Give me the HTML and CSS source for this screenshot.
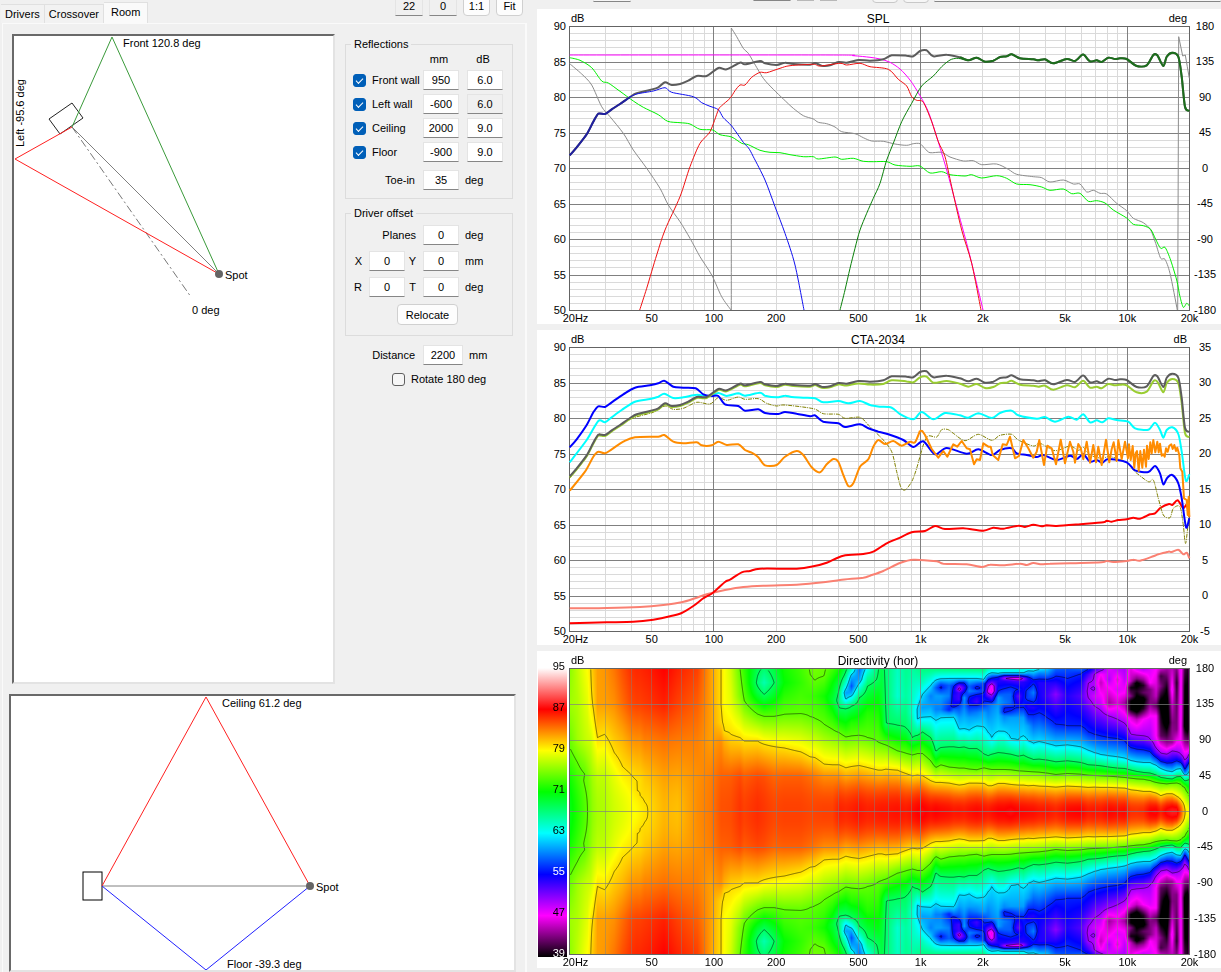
FILE: index.html
```html
<!DOCTYPE html>
<html lang="en">
<head>
  <meta charset="UTF-8" />
  <title>Room</title>
  <link rel="stylesheet" href="styles.css">
</head>
<body>

  <div class="app">
    <div class="side">
      <div class="side-head">
        <div class="tabs" role="tablist">
          <button class="tab" role="tab">Drivers</button>
          <button class="tab" role="tab">Crossover</button>
          <button class="tab active" role="tab" aria-selected="true">Room</button>
        </div>
        <div class="tools">
          <input class="num" type="text" value="22" aria-label="Horizontal angle" readonly>
          <input class="num" type="text" value="0" aria-label="Vertical angle" readonly>
          <button class="btn">1:1</button>
          <button class="btn">Fit</button>
        </div>
      </div>

      <div class="page">
        <div class="upper">
          <svg class="view plan">
            <polygon points="35,83 58,67 69,82 46,98" fill="none" stroke="#222" />
            <polyline points="58,91 98,1 205,238" fill="none" stroke="#3a9a3a" />
            <line x1="58" y1="91" x2="205" y2="238" stroke="#808080" />
            <line x1="58" y1="91" x2="177" y2="261" stroke="#777" stroke-dasharray="8 3 2 3" />
            <polyline points="58,91 1,123 205,238" fill="none" stroke="#ff2020" />
            <circle cx="205" cy="238" r="4" fill="#646464" />
            <text x="109" y="11">Front 120.8 deg</text>
            <text x="211" y="243">Spot</text>
            <text x="178" y="278">0 deg</text>
            <text transform="translate(10 111) rotate(-90)">Left -95.6 deg</text>
          </svg>

          <div class="form">
            <fieldset>
              <legend>Reflections</legend>
              <div class="reflections">
                <span class="head mm">mm</span>
                <span class="head">dB</span>
                <label class="check"><input type="checkbox" checked>Front wall</label>
                <input class="num" type="text" value="950" aria-label="Front wall mm">
                <input class="num" type="text" value="6.0" aria-label="Front wall dB">
                <label class="check"><input type="checkbox" checked>Left wall</label>
                <input class="num" type="text" value="-600" aria-label="Left wall mm">
                <input class="num" type="text" value="6.0" aria-label="Left wall dB" readonly>
                <label class="check"><input type="checkbox" checked>Ceiling</label>
                <input class="num" type="text" value="2000" aria-label="Ceiling mm">
                <input class="num" type="text" value="9.0" aria-label="Ceiling dB">
                <label class="check"><input type="checkbox" checked>Floor</label>
                <input class="num" type="text" value="-900" aria-label="Floor mm">
                <input class="num" type="text" value="9.0" aria-label="Floor dB">
              </div>
              <div class="line toe">
                <label for="toe">Toe-in</label>
                <input class="num" id="toe" type="text" value="35">
                <span class="unit">deg</span>
              </div>
            </fieldset>

            <fieldset>
              <legend>Driver offset</legend>
              <div class="offset">
                <label class="wide" for="planes">Planes</label>
                <input class="num" id="planes" type="text" value="0">
                <span class="unit">deg</span>
                <label for="ox">X</label>
                <input class="num" id="ox" type="text" value="0">
                <label for="oy">Y</label>
                <input class="num" id="oy" type="text" value="0">
                <span class="unit">mm</span>
                <label for="or">R</label>
                <input class="num" id="or" type="text" value="0">
                <label for="ot">T</label>
                <input class="num" id="ot" type="text" value="0">
                <span class="unit">deg</span>
                <button class="btn relocate">Relocate</button>
              </div>
            </fieldset>

            <div class="line distance">
              <label for="distance">Distance</label>
              <input class="num" id="distance" type="text" value="2200">
              <span class="unit">mm</span>
            </div>
            <label class="check rotate"><input type="checkbox">Rotate 180 deg</label>
          </div>
        </div>

        <svg class="view section">
          <rect x="72" y="176" width="19" height="28" fill="#fff" stroke="#000" />
          <line x1="91" y1="190" x2="299" y2="190" stroke="#808080" />
          <polyline points="91,190 195,1 299,190" fill="none" stroke="#ff2020" />
          <polyline points="91,190 195,274 299,190" fill="none" stroke="#2020ff" />
          <circle cx="299" cy="190" r="4" fill="#646464" />
          <text x="211" y="11">Ceiling 61.2 deg</text>
          <text x="305" y="195">Spot</text>
          <text x="216" y="272">Floor -39.3 deg</text>
        </svg>
      </div>
    </div>

    <div class="charts">
      <div class="chart-tools">
        <input class="t-a" type="text" aria-label="Smoothing">
        <input class="t-b" type="text" aria-label="Scale">
        <button class="t-c" aria-label="Down"></button>
        <button class="t-c" aria-label="Up"></button>
        <button class="t-d" aria-label="Copy"></button>
        <button class="t-d" aria-label="Paste"></button>
        <input class="t-e" type="text" aria-label="Notes">
      </div>
      <svg class="chart" id="spl" viewBox="0 0 684 315"></svg>
      <svg class="chart" id="cta" viewBox="0 0 684 315"></svg>
      <svg class="chart" id="directivity" viewBox="0 0 684 317"></svg>
    </div>
  </div>

  <script src="charts.js"></script>
</body>
</html>
```
FILE: styles.css
```css
* {
  box-sizing: border-box;
}

body {
  margin: 0;
  background: #f0f0f0;
  color: #000;
  font-family: "Liberation Sans", Arial, sans-serif;
  font-size: 11px;
  line-height: 14px;
}

input, button {
  font: inherit;
  color: inherit;
}

.app {
  display: grid;
  grid-template-columns: 537px 1fr;
  min-height: 100vh;
}

/* left side */

.side {
  display: flex;
  flex-direction: column;
  padding: 0 10px 0 0;
}

.side-head {
  display: flex;
  justify-content: space-between;
  align-items: flex-end;
  height: 23px;
}

.tabs {
  display: flex;
  align-items: flex-end;
  padding-left: 1px;
}

.tab {
  height: 19px;
  padding: 0 4px;
  border: 1px solid #e0e0e0;
  border-left: 0;
  border-bottom: 0;
  background: #f2f2f2;
}

.tab.active {
  height: 21px;
  padding: 0 7px 3px;
  background: #fafafa;
}

.tools {
  display: flex;
  align-items: flex-end;
  gap: 6px;
  height: 23px;
  padding: 0 4px 7px 0;
}

.tools .num {
  width: 28px;
}

.tools .btn {
  width: 27px;
}

.num {
  width: 36px;
  height: 20px;
  padding: 0;
  border: 1px solid #e4e4e4;
  border-bottom-color: #868686;
  background: #fff;
  text-align: center;
}

.num:read-only {
  background: #f0f0f0;
}

.btn {
  height: 21px;
  padding: 0;
  border: 1px solid #d0d0d0;
  border-radius: 4px;
  background: #fdfdfd;
}

.page {
  display: flex;
  flex-direction: column;
  flex: 1;
  gap: 10px;
  margin-left: 2px;
  padding: 10px 9px 0 6px;
  border-top: 1px solid #fafafa;
  border-left: 1px solid #fafafa;
  border-right: 2px solid #fafafa;
}

.upper {
  display: flex;
  flex: 1;
  gap: 10px;
  padding-left: 3px;
}

.view {
  display: block;
  background: #fff;
  border: 2px solid;
  border-color: #696969 #e3e3e3 #e3e3e3 #696969;
  font-size: 11px;
}

.plan {
  width: 323px;
  height: auto;
}

.section {
  width: 100%;
  height: 278px;
}

/* forms */

.form {
  width: 168px;
  padding-top: 3px;
}

fieldset {
  margin: 0 0 7px;
  padding: 0 9px 8px 7px;
  border: 1px solid #dcdcdc;
}

legend {
  padding: 0 3px;
  margin-left: -2px;
  line-height: 14px;
}

.reflections {
  display: grid;
  grid-template-columns: 70px 44px 36px;
  grid-template-rows: 15px;
  grid-auto-rows: 20px;
  row-gap: 4px;
  align-items: center;
}

.head {
  text-align: center;
  width: 32px;
}

.mm {
  grid-column: 2;
}

.check {
  display: flex;
  align-items: center;
  gap: 6px;
  white-space: nowrap;
}

.check input {
  appearance: none;
  width: 13px;
  height: 13px;
  margin: 0;
  border: 1px solid #606060;
  border-radius: 3px;
  background: #f6f6f6;
}

.check input:checked {
  border-color: #005fb8;
  background: #005fb8;
}

.check input:checked::before {
  content: "";
  display: block;
  width: 6px;
  height: 3px;
  margin: 3px 0 0 2px;
  border: solid #fff;
  border-width: 0 0 1px 1px;
  transform: rotate(-45deg);
}

.line {
  display: flex;
  align-items: center;
}

.line label {
  width: 70px;
  padding-right: 8px;
  text-align: right;
}

.unit {
  padding-left: 6px;
}

.toe {
  margin-top: 8px;
}

.offset {
  display: grid;
  grid-template-columns: 16px 36px 18px 36px 1fr;
  gap: 6px 0;
  align-items: center;
  padding: 5px 0 2px;
}

.offset label {
  padding: 0 7px 0 1px;
  text-align: right;
}

.offset .wide {
  grid-column: 1 / 4;
}

.relocate {
  grid-column: 2 / 5;
  width: 61px;
  margin: 1px 0 0 28px;
}

.distance {
  padding-left: 8px;
  margin-top: 9px;
}

.distance .num {
  width: 40px;
}

.rotate {
  height: 20px;
  margin: 4px 0 0 47px;
}

/* right side */

.charts {
  display: flex;
  flex-direction: column;
  gap: 6px;
}

.chart-tools {
  display: flex;
  align-items: flex-end;
  height: 3px;
  padding: 0 0 0 56px;
  overflow: hidden;
}

.chart-tools input,
.chart-tools button {
  flex: none;
  height: 22px;
  padding: 0;
  border: 1px solid #e4e4e4;
  background: #f6f6f6;
}

.chart-tools input {
  border-bottom-color: #868686;
  margin-bottom: 1px;
}

.chart-tools .t-a {
  width: 38px;
  margin-right: 122px;
}

.chart-tools .t-b {
  width: 38px;
  margin-right: 6px;
  margin-bottom: 2px;
}

.chart-tools .t-c {
  width: 17px;
  margin: 0 6px 2px 0;
  background: #c4c4c4;
  border-color: #b8b8b8;
}

.chart-tools .t-d {
  width: 26px;
  margin: 0 5px 0 0;
  border-color: #c8c8c8;
  border-radius: 4px;
}

.chart-tools .t-c + .t-d {
  margin-left: 29px;
}

.chart-tools .t-e {
  flex: 1;
  min-width: 0;
}

.chart {
  display: block;
  width: 100%;
  height: auto;
  background: #fff;
}

.chart text {
  font-size: 11px;
}

.chart .title {
  font-size: 12px;
}

.chart canvas {
  display: block;
  width: 620px;
  height: 286px;
}
```
FILE: charts.js
```js
const NS = 'http://www.w3.org/2000/svg';
const LEFT = 32.5;
const TOP = 17.5;
const WIDTH = 620;

function add(parent, name, attrs, text) {
  const el = document.createElementNS(NS, name);
  for (const k in attrs) el.setAttribute(k, attrs[k]);
  if (text !== undefined) el.textContent = text;
  parent.appendChild(el);
  return el;
}

// points are stored at 3 units per pixel in two tiles, the second one starts at 1020
function pts(a, b) {
  const read = (s, dx) => s.trim().split(/\s+/).filter(Boolean).map(p => {
    const [x, y] = p.split(',').map(Number);
    return [x + dx, y];
  });
  return read(a, 0).concat(read(b || '', 1020));
}

function toPath(points, originY, straight) {
  const p = points.map(([x, y]) => [(x - 21) / 3, (y - originY) / 3]);
  let d = `M${p[0][0].toFixed(1)} ${p[0][1].toFixed(1)}`;
  for (let i = 1; i < p.length; i++) {
    if (straight) {
      d += `L${p[i][0].toFixed(1)} ${p[i][1].toFixed(1)}`;
      continue;
    }
    const a = p[Math.max(i - 2, 0)], b = p[i - 1], c = p[i], e = p[Math.min(i + 1, p.length - 1)];
    const c1 = [b[0] + (c[0] - a[0]) / 7, b[1] + (c[1] - a[1]) / 7];
    const c2 = [c[0] - (e[0] - b[0]) / 7, c[1] - (e[1] - b[1]) / 7];
    d += 'C' + [...c1, ...c2, ...c].map(v => v.toFixed(1)).join(' ');
  }
  return d;
}

function trace(svg, points, originY, color, width, opts = {}) {
  add(svg, 'path', {
    d: toPath(points, originY, opts.straight),
    fill: 'none', stroke: color, 'stroke-width': width,
    'stroke-linejoin': 'round', 'stroke-dasharray': opts.dash || 'none'
  });
}

const freqX = f => LEFT + WIDTH * Math.log10(f / 20) / 3;

function verticals(svg, height, minor, major) {
  for (const dec of [10, 100, 1000, 10000]) {
    for (let i = 1; i < 10; i++) {
      const f = dec * i;
      if (f <= 20 || f >= 20000) continue;
      const x = Math.floor(freqX(f)) + 0.5;
      add(svg, 'line', { x1: x, x2: x, y1: TOP, y2: TOP + height, stroke: i === 1 ? major : minor });
    }
  }
}

function freqLabels(svg, y) {
  [[20, '20Hz', 6], [50, '50', 0], [100, '100', 0], [200, '200', 0], [500, '500', 0],
   [1000, '1k', 0], [2000, '2k', 0], [5000, '5k', 0], [10000, '10k', 0], [20000, '20k', 0]]
    .forEach(([f, t, dx]) => add(svg, 'text', { x: freqX(f) + dx, y, 'text-anchor': 'middle' }, t));
}

function captions(svg, title, right) {
  add(svg, 'text', { x: 34, y: 13 }, 'dB');
  add(svg, 'text', { x: 341, y: 14, 'text-anchor': 'middle', class: 'title' }, title);
  add(svg, 'text', { x: 650, y: 13, 'text-anchor': 'end' }, right);
}

function rightLabels(svg, labels, height) {
  labels.forEach((t, i) => add(svg, 'text', {
    x: 668, y: TOP + 3 + i * height / (labels.length - 1), 'text-anchor': 'middle'
  }, t));
}

function lineChart(svg, title, right, labels) {
  const h = 284;
  for (let i = 0; i <= 40; i++) {
    if (i % 5 === 0) continue;
    const y = Math.floor(TOP + i * h / 40) + 0.5;
    add(svg, 'line', { x1: LEFT, x2: LEFT + WIDTH, y1: y, y2: y, stroke: '#dadada' });
  }
  verticals(svg, h, '#dadada', '#808080');
  for (let i = 0; i <= 8; i++) {
    const y = Math.floor(TOP + i * h / 8) + 0.5;
    add(svg, 'line', { x1: LEFT, x2: LEFT + WIDTH, y1: y, y2: y, stroke: '#808080' });
    add(svg, 'text', { x: 29, y: y + 3, 'text-anchor': 'end' }, 90 - i * 5);
  }
  add(svg, 'rect', { x: LEFT, y: TOP, width: WIDTH, height: h, fill: 'none', stroke: '#646464' });
  captions(svg, title, right);
  rightLabels(svg, labels, h);
  freqLabels(svg, 313);
}

const total = pts(
  `119,466 140,442 170,403 190,365 205,341 225,342 245,328 270,312 300,291 320,280 360,270 385,262
   405,247 425,255 450,252 475,242 500,228 530,228 565,204 590,208 630,188 645,193 690,183 705,190
   740,195 765,188 790,192 840,194 855,189 875,197 900,196 925,186 950,188 985,180 1020,182`,
  `40,178 65,166 110,167 130,169 150,153 170,151 190,169 230,164 270,172 295,181 320,173 345,185
   370,182 390,171 410,169 425,163 450,175 490,178 505,181 525,178 550,190 590,177 615,183 635,165 643,165
   660,184 680,181 695,186 715,173 735,177 750,175 770,177 800,198 830,196 850,165 862,166 880,198 890,170 907,158 925,170
   935,230 945,320 958,333`);

function drawSpl() {
  const svg = document.getElementById('spl');
  const o = 27;
  lineChart(svg, 'SPL', 'deg', [180, 135, 90, 45, 0, -45, -90, -135, -180]);

  const gray = '#8c8c8c';
  trace(svg, pts(
    `119,191 155,222 185,255 215,320 240,350 280,400 310,450 350,505 390,565 415,615 450,665 480,715
     510,770 545,825 575,890 603,930`), o, gray, 1);
  trace(svg, pts('604,930 604,84'), o, gray, 1);
  trace(svg, pts(
    `604,84 620,110 640,145 655,160 670,185 700,235 730,268 760,297 790,325 820,347 850,357 865,367
     890,371 915,381 935,395 975,401 1000,413 1025,423 1060,424`,
    `75,432 110,436 130,431 150,431 165,446 180,458 215,457 240,471 280,483 310,482 335,494 380,492
     415,508 440,523 490,530 515,533 540,546 580,540 610,552 630,552 650,576 670,571 690,580 710,582
     740,610 770,632 790,655 820,668 842,690 857,730 872,775 885,778 900,820 922,930`), o, gray, 1);
  trace(svg, pts('', '923,930 926,110 938,168 946,165 952,200 958,235'), o, gray, 1, { straight: true });

  trace(svg, pts(
    `119,173 150,181 185,203 215,243 235,249 270,274 310,303 340,322 385,344 413,364 450,368 480,372
     510,388 548,390 570,404 605,411 635,430 655,434 690,451 720,457 750,458 780,464 820,470 850,470
     865,477 915,471 935,478 970,475 1000,484 1030,485`,
    `50,485 75,495 120,499 150,498 180,519 215,515 240,524 285,528 305,524 335,534 380,527 410,535
     440,552 480,554 515,561 540,571 580,567 605,581 630,580 655,604 680,602 705,609 730,630 770,654
     790,673 820,677 842,688 857,718 872,745 885,742 900,775 920,840 930,890 940,922 950,910 958,918`),
    o, '#00f000', 1);

  trace(svg, pts('119,165 900,165 970,167 1020,172',
    `30,177 60,187 90,207 120,240 150,287 175,335 200,410 230,510 260,620 290,730 315,830 339,930`),
    o, '#f0f', 1);

  trace(svg, total, o, '#5c5c5c', 2);
  trace(svg, total.filter(p => p[0] <= 305), o, '#2020a0', 2);
  trace(svg, pts(
    `300,291 320,282 370,273 405,263 425,277 490,290 515,308 540,319 565,329 580,353 605,378 640,427
     655,443 670,470 705,540 735,620 765,700 795,795 822,930`), o, '#1010f0', 1);

  trace(svg, pts(
    `329,930 350,865 380,765 405,690 450,590 480,500 510,430 540,395 565,330 575,317 600,295 615,272
     630,255 645,255 665,232 690,217 710,218 750,205 780,197 850,193 870,198 930,190 950,195 990,190
     1020,200`,
    `55,208 85,238 110,258 125,290 140,301 160,307 185,365 205,425 225,470 245,560 275,690 305,790 333,930`),
    o, '#f01010', 1);

  trace(svg, pts('930,930 945,870 960,805 975,745 990,690 1010,640 1030,595',
    `30,550 50,480 70,430 95,365 125,310 155,258 190,228 215,200 240,180 260,175 280,178`),
    o, '#0a800a', 1);
  trace(svg, total.filter(p => p[0] >= 1290), o, '#1c6e1c', 2);
}

function drawCta() {
  const svg = document.getElementById('cta');
  const o = 15;
  lineChart(svg, 'CTA-2034', 'dB', [35, 30, 25, 20, 15, 10, 5, 0, -5]);

  trace(svg, pts(
    `119,850 230,849 330,846 400,840 455,832 500,818 530,808 585,795 640,786 700,782 800,779 880,772
     930,765 1000,758 1020,752`,
    `40,738 90,714 130,704 200,709 220,716 290,718 335,726 360,719 400,721 450,716 470,720 490,714
     515,718 540,716 600,715 695,712 710,708 730,711 770,708 790,704 810,707 850,694 865,688 895,680
     905,681 925,674 940,688 950,683 958,700`), o, '#fa8072', 2);
  trace(svg, pts(
    `119,895 230,892 310,890 370,884 420,874 455,864 490,843 520,820 548,804 585,771 600,764 635,742
     660,738 690,731 800,731 850,724 890,713 940,692 1000,687 1030,680`,
    `50,655 85,640 125,622 165,618 195,603 225,612 280,610 340,617 370,608 400,611 445,602 465,606
     490,599 515,604 530,601 560,603 640,597 700,592 710,587 725,590 745,585 770,583 790,578 810,581
     840,568 855,565 872,548 897,537 907,540 923,526 940,550 950,540 958,575`), o, '#f00', 2);

  trace(svg, pts(
    `119,460 170,395 205,328 225,332 300,283 370,262 405,243 430,253 460,250 500,232 540,237 565,218
     590,226 625,216 645,223 685,221 710,235 740,243 765,240 850,251 880,266 925,268 945,280 990,277
     1015,300`,
    `20,325 40,345 65,380 80,440 92,485 105,495 125,470 140,430 160,360 175,333 200,336 215,314 235,314
     250,325 285,347 325,328 365,346 390,331 425,328 445,345 490,363 510,355 555,377 600,363 625,376
     640,367 660,390 695,400 720,395 770,412 795,440 835,470 850,465 865,520 880,570 900,578 910,550
     930,545 940,600 947,655 958,560`), o, '#808000', 1, { dash: '4 1 1 1' });

  trace(svg, pts(
    `119,412 170,345 205,288 225,292 245,277 275,255 315,230 360,222 385,215 403,206 430,219 460,217
     500,209 535,214 565,204 590,213 625,205 645,212 690,203 705,212 740,217 765,212 785,216 820,218
     855,220 880,232 925,228 955,235 990,228 1020,240`,
    `30,245 65,248 90,267 130,283 155,261 190,283 225,264 270,271 295,278 325,265 365,279 390,264
     425,257 445,271 500,281 525,276 555,290 595,275 620,284 640,268 660,292 680,286 697,292 715,280
     740,285 775,290 795,310 835,314 855,293 870,315 880,338 890,315 907,307 925,327 935,380 945,455
     950,468 958,448`), o, '#0ff', 2);
  trace(svg, pts(
    `119,367 140,343 170,300 190,262 205,244 225,246 245,232 280,208 315,188 360,181 385,175 403,167
     430,185 460,188 497,190 520,208 545,213 565,213 585,238 625,243 645,257 685,253 705,264 745,267
     765,261 800,266 840,274 855,271 880,290 925,295 945,306 990,298 1015,310`,
    `25,320 55,328 100,345 130,366 160,349 195,388 230,369 290,386 325,373 365,390 390,375 425,370
     440,385 470,390 500,396 520,390 560,405 600,392 620,402 640,388 660,410 680,405 697,413 715,402 770,412
     795,436 835,441 855,423 870,445 880,478 892,458 907,450 925,475 935,520 945,590 950,608 958,580`),
    o, '#00f', 2);

  const onAxis = total.map(([x, y]) => [x, y - 12]);
  const window = onAxis.map(([x, y]) =>
    [x, y + 3 + 13 * Math.min(1, Math.max(0, (x - 900) / 270))]);
  trace(svg, window, o, '#9acd32', 2);
  trace(svg, onAxis, o, '#5c5c5c', 2);

  trace(svg, pts(
    `119,497 165,440 190,395 205,380 225,385 245,373 280,350 315,337 385,335 403,330 430,350 460,355
     500,352 515,361 545,361 565,350 590,360 625,358 645,375 665,383 685,397 705,421 740,420 765,395
     800,378 820,390 845,427 870,442 890,418 910,402 925,410 940,450 955,483 970,475 990,425 1015,403`,
    `10,365 25,345 45,357 70,348 95,362 120,350 135,352 150,317`), o, '#ff8c00', 2);
  trace(svg, pts('',
    `150,317 157,318 165,330 185,372 205,398 220,378 232,395 250,358 262,365 275,348 290,370 300,373
     312,418 320,403 330,405 340,355 355,365 362,365 368,390 385,405 398,358 410,360 420,335 435,400
     447,393 460,345 475,370 490,398 500,380 508,345 522,420 532,362 545,370 558,418 572,344 585,415
     600,350 610,380 615,413 625,357 632,370 640,403 650,350 660,413 670,360 678,412 685,365 695,420
     708,344 718,412 725,372 731,352 740,408 745,345 755,402 765,350 774,400 777,358 782,405 788,363
     793,428 797,385 801,378 806,438 811,378 817,428 822,374 828,425 831,362 836,402 841,352 845,385
     850,345 856,382 862,350 866,382 870,356 875,392 880,388 884,395 888,370 893,380 898,362 904,358
     908,372 913,360 918,378 922,368 928,390 931,430 937,440 942,520 950,525 953,570 956,515 958,575`),
    o, '#ff8c00', 2, { straight: true });
}

// directivity map columns: x, then pairs of (row, level) from 180 deg down to the axis
const MAP = [
  [119, 70, 75.5, 175, 76, 310, 74, 400, 71.5, 499, 70.5],
  [140, 70, 77, 283, 76, 350, 74, 499, 72],
  [162, 70, 78.5, 283, 77, 385, 74, 405, 74.2, 499, 73.5],
  [170, 70, 79, 283, 77.3, 391, 74.6, 499, 74],
  [180, 70, 80, 175, 79.7, 283, 77.5, 400, 75.5, 499, 75],
  [186, 70, 80.8, 175, 80, 283, 78.2, 391, 76.2, 499, 75.6],
  [200, 70, 82, 175, 82, 275, 80, 391, 77, 499, 76.3],
  [222, 70, 82.3, 175, 82, 265, 80, 391, 77, 499, 76.5],
  [250, 70, 83.3, 175, 82.5, 320, 80, 391, 78.3, 499, 77.5],
  [275, 70, 84.5, 175, 83.6, 283, 81.3, 362, 80, 499, 78.1],
  [300, 70, 85.5, 175, 84.7, 283, 82.3, 385, 80, 499, 78.8],
  [318, 70, 85.8, 175, 85, 283, 82.5, 405, 80, 435, 80, 499, 79.1],
  [328, 70, 85.8, 175, 85, 283, 82.5, 404, 80.1, 450, 80, 499, 79.4],
  [342, 70, 86, 175, 85.2, 283, 83, 391, 80.8, 470, 80, 499, 79.8],
  [351, 70, 86.1, 175, 85.3, 283, 83, 391, 81, 499, 80],
  [400, 70, 87, 175, 86, 283, 83.5, 391, 82, 499, 81.3],
  [440, 70, 86, 175, 85, 283, 83.2, 391, 81.8, 499, 81],
  [500, 70, 85, 175, 84, 283, 83, 391, 82.5, 499, 82.6],
  [540, 70, 82, 175, 82, 283, 82, 391, 83, 499, 83.2],
  [571, 70, 80, 175, 80, 230, 80.3, 283, 82.5, 391, 84, 499, 84.5],
  [580, 70, 79, 175, 79, 255, 80, 283, 81.5, 391, 84, 499, 84.5],
  [600, 70, 77.5, 175, 78.3, 265, 80, 391, 84.1, 499, 84.6],
  [628, 70, 74, 150, 75, 175, 76, 275, 80, 391, 84.7, 499, 85.4],
  [640, 70, 72.5, 163, 74, 285, 80, 391, 84.1, 499, 85],
  [680, 70, 68.5, 110, 67.5, 140, 69, 190, 73, 204, 74, 285, 80, 391, 84.7, 499, 85.6],
  [700, 70, 67.5, 110, 65.5, 145, 68, 211, 74, 295, 80, 391, 84.5, 499, 85.3],
  [730, 70, 69, 110, 68, 150, 70, 211, 74, 302, 80, 391, 83.8, 499, 84.8],
  [760, 70, 71.5, 110, 71, 205, 74, 306, 80, 391, 84, 499, 85],
  [810, 70, 73, 110, 72.5, 203, 74, 318, 80, 391, 84, 499, 85],
  [838, 70, 74.1, 85, 74, 150, 72.8, 212, 74, 333, 80, 391, 83.5, 499, 84.8],
  [852, 70, 74.6, 103, 74, 150, 72.6, 217, 74, 335, 80, 391, 83.2, 499, 84.9],
  [880, 70, 74.2, 90, 74, 150, 71.5, 235, 74, 355, 80, 391, 82.5, 499, 85],
  [905, 70, 73, 110, 71, 160, 69.5, 250, 74, 357, 80, 391, 82.5, 499, 85],
  [925, 70, 71.5, 130, 68, 165, 67, 185, 68, 260, 74, 357, 80, 391, 82.5, 499, 86],
  [945, 70, 68.5, 90, 67, 115, 64, 140, 60, 160, 62, 188, 68, 273, 74, 366, 80, 499, 85.8],
  [962, 70, 65, 90, 61, 120, 57.5, 145, 61, 180, 68, 230, 72, 270, 74, 362, 80, 499, 86],
  [985, 70, 58.5, 100, 60, 125, 64, 155, 68, 210, 71, 268, 74, 359, 80, 499, 86.4],
  [1010, 70, 63.5, 95, 66, 120, 68, 200, 72, 275, 74, 365, 80, 499, 86],
  [1042, 70, 67.9, 100, 68.3, 150, 70.5, 289, 74, 373, 80, 499, 86.2],
  [1053, 70, 68.9, 150, 69.5, 240, 71, 293, 74, 373, 80, 499, 86.3],
  [1065, 70, 67.5, 150, 67.8, 232, 68, 297, 74, 370, 80, 499, 86.3],
  [1100, 70, 65, 150, 64.5, 238, 68, 315, 74, 373, 80, 499, 86.5],
  [1125, 70, 66.5, 150, 66, 245, 68, 322, 74, 383, 80, 499, 86.2],
  [1145, 70, 66, 130, 65, 200, 64.5, 275, 68, 327, 74, 390, 80, 499, 86.6],
  [1160, 70, 66.5, 150, 63.5, 190, 61.8, 218, 61.9, 268, 68, 323, 74, 388, 80, 499, 87],
  [1175, 70, 67, 110, 65, 145, 62, 185, 60, 214, 62, 258, 68, 323, 74, 390, 80, 499, 87.2],
  [1200, 70, 67, 100, 64, 118, 62, 150, 59, 180, 60, 212, 62, 275, 68, 345, 74, 405, 80, 499, 86.7],
  [1215, 70, 67, 102, 62, 125, 58, 150, 60, 190, 59, 223, 62, 318, 68, 365, 74, 410, 80, 499, 87],
  [1230, 70, 67, 98, 62, 117, 56.5, 125, 55.5, 132, 57, 150, 60, 190, 59, 215, 62, 305, 68, 357, 74, 410, 80, 499, 86.8],
  [1255, 70, 67, 97, 62, 118, 58, 150, 59, 180, 56.5, 192, 56, 200, 59, 214, 62, 303, 68, 364, 74, 412, 80, 499, 86.6],
  [1269, 70, 67, 97, 62, 120, 56, 150, 54, 180, 55, 190, 58, 213, 62, 303, 68, 365, 74, 415, 80, 499, 86.3],
  [1285, 70, 67, 97, 62, 110, 56, 120, 51, 130, 48.5, 140, 53, 160, 53, 182, 57, 215, 60, 250, 62, 305, 68, 367, 74, 418, 80, 499, 86.4],
  [1300, 70, 67, 97, 62, 110, 56, 125, 53, 140, 56, 155, 60, 180, 59, 248, 62, 303, 68, 367, 74, 416, 80, 499, 86.2],
  [1315, 70, 67, 97, 62, 120, 58, 135, 59, 152, 56, 165, 55, 178, 56, 215, 60, 253, 62, 308, 68, 370, 74, 412, 80, 499, 86.5],
  [1338, 70, 67, 97, 62, 118, 56.5, 126, 55, 135, 58, 155, 54, 168, 53, 178, 56, 200, 59, 240, 62, 308, 68, 372, 74, 412, 80, 499, 86.8],
  [1360, 70, 67, 100, 62, 112, 57, 130, 57, 150, 55, 178, 57, 200, 60, 243, 62, 325, 68, 366, 74, 413, 80, 499, 86.5],
  [1372, 70, 65, 84, 62, 100, 56, 118, 51, 135, 48, 155, 54, 178, 58, 260, 62, 330, 68, 369, 74, 420, 80, 499, 86.3],
  [1383, 70, 64, 80, 62, 93, 57, 108, 52, 120, 47, 135, 46, 150, 51, 165, 55, 178, 59, 278, 62, 325, 68, 371, 74, 420, 80, 499, 86.6],
  [1402, 70, 64, 82, 62, 92, 56, 105, 54, 135, 56, 155, 60, 180, 60, 256, 62, 320, 68, 371, 74, 413, 80, 499, 87],
  [1420, 70, 64, 80, 62, 88, 56, 96, 50, 105, 54, 128, 56, 145, 58, 170, 59, 185, 56, 198, 55.5, 210, 59, 256, 62, 322, 68, 371, 74, 413, 80, 499, 87],
  [1440, 70, 64, 80, 62, 88, 56, 96, 48, 104, 53, 122, 56, 145, 58, 170, 58, 188, 55.5, 195, 56, 215, 60, 278, 62, 325, 68, 372, 74, 416, 80, 499, 87.3],
  [1462, 70, 64, 80, 62, 88, 56, 97, 47, 106, 53, 130, 56, 150, 52, 168, 54, 185, 56, 215, 60, 283, 62, 331, 68, 375, 74, 418, 80, 499, 86.9],
  [1478, 70, 64, 80, 62, 90, 56, 98, 50, 108, 54, 140, 55, 170, 55.5, 184, 56, 215, 60, 270, 62, 328, 68, 376, 74, 418, 80, 499, 86.8],
  [1492, 70, 63, 82, 60, 98, 54, 120, 55, 135, 57, 155, 57, 180, 54, 206, 56, 240, 60, 285, 62, 335, 68, 377, 74, 420, 80, 499, 86.7],
  [1508, 70, 63, 80, 61, 105, 55, 122, 57, 140, 59, 160, 57, 185, 54, 206, 56, 292, 62, 341, 68, 378, 74, 419, 80, 499, 86.6],
  [1525, 70, 62, 82, 59, 110, 54, 150, 54.5, 185, 55, 200, 56, 287, 62, 340, 68, 379, 74, 421, 80, 499, 86.3],
  [1550, 70, 61, 84, 59, 110, 54, 150, 53, 216, 56, 293, 62, 343, 68, 382, 74, 422, 80, 499, 86.4],
  [1575, 70, 58, 90, 56, 120, 53, 145, 50.6, 180, 53, 235, 56, 300, 62, 348, 68, 386, 74, 424, 80, 499, 85.9],
  [1610, 70, 57.5, 97, 56, 150, 54, 240, 56, 297, 62, 345, 68, 383, 74, 421, 80, 499, 86.8],
  [1650, 70, 58, 83, 56, 150, 52.5, 240, 56, 303, 62, 350, 68, 385, 74, 423, 80, 499, 87],
  [1672, 70, 56, 85, 53, 110, 50, 135, 49.5, 155, 50, 200, 53, 258, 56, 313, 62, 357, 68, 388, 74, 425, 80, 499, 86.2],
  [1690, 70, 53, 85, 50, 115, 49.5, 128, 50.5, 150, 48.5, 180, 50, 265, 56, 320, 62, 358, 68, 389, 74, 424, 80, 499, 86.4],
  [1710, 70, 51, 85, 47, 110, 45, 150, 47.5, 193, 50, 270, 56, 326, 62, 360, 68, 390, 74, 425, 80, 499, 86.3],
  [1735, 70, 48, 100, 49.5, 125, 47, 170, 44, 210, 50, 275, 56, 330, 62, 364, 68, 391, 74, 425, 80, 499, 86.9],
  [1760, 70, 49, 100, 46, 130, 48, 170, 46, 220, 50, 278, 56, 333, 62, 367, 68, 393, 74, 426, 80, 499, 86.6],
  [1782, 70, 49.5, 100, 49, 140, 47, 170, 44, 232, 50, 285, 56, 337, 62, 368, 68, 395, 74, 427, 80, 499, 86.8],
  [1800, 70, 46, 105, 45, 125, 39.5, 150, 43, 165, 39, 190, 39, 215, 46, 265, 50, 305, 56, 344, 62, 373, 68, 397, 74, 432, 80, 499, 85.6],
  [1818, 70, 48, 98, 43, 112, 38, 135, 40, 160, 38, 195, 38, 220, 45, 268, 50, 310, 56, 348, 62, 377, 68, 399, 74, 434, 80, 499, 85.5],
  [1838, 70, 49, 100, 44, 118, 40, 140, 42, 160, 38, 188, 40, 220, 47, 270, 50, 312, 56, 350, 62, 380, 68, 400, 74, 437, 80, 499, 85.7],
  [1858, 70, 48, 110, 47, 130, 43, 170, 43, 220, 48, 280, 50, 317, 56, 350, 62, 382, 68, 404, 74, 437, 80, 499, 87],
  [1876, 70, 47, 150, 45, 180, 42, 210, 47, 270, 47, 300, 49, 320, 52, 335, 56, 358, 62, 388, 68, 410, 74, 442, 80, 499, 87.2],
  [1890, 70, 45, 90, 41, 120, 43, 170, 38, 220, 40, 270, 42, 300, 47, 322, 50, 347, 56, 368, 62, 395, 68, 412, 74, 450, 80, 499, 86],
  [1908, 70, 44, 130, 39, 180, 37, 230, 37, 270, 41, 300, 45, 325, 50, 352, 56, 375, 62, 398, 68, 414, 74, 444, 80, 499, 87.3],
  [1924, 70, 45, 130, 48, 180, 45, 230, 43, 290, 44, 315, 50, 351, 56, 378, 62, 400, 68, 412, 74, 444, 80, 499, 87.8],
  [1938, 70, 43, 110, 40, 180, 42, 250, 43, 318, 50, 345, 56, 370, 62, 393, 68, 411, 74, 452, 80, 499, 87.7],
  [1950, 70, 48, 200, 48, 290, 47, 325, 50, 350, 56, 368, 62, 392, 68, 415, 74, 462, 80, 499, 84.5],
  [1962, 70, 41, 120, 39, 240, 38, 275, 42, 310, 46, 345, 50, 372, 56, 388, 62, 405, 68, 425, 74, 480, 79.5, 499, 80],
  [1970, 70, 40, 150, 38, 250, 38, 290, 43, 335, 50, 358, 56, 385, 62, 403, 68, 440, 74, 470, 77, 499, 79],
  [1979, 70, 44, 150, 46, 240, 43, 300, 45, 320, 50, 340, 56, 370, 62, 395, 68, 460, 74, 499, 79]
];

const SCALE = [
  [39, 0, 0, 0], [47, 255, 0, 255], [55, 0, 0, 255], [63, 0, 255, 255],
  [71, 0, 255, 0], [79, 255, 255, 0], [87, 255, 0, 0], [95, 255, 255, 255]
];

function color(v) {
  v = Math.min(95, Math.max(39, v));
  const i = Math.min(6, Math.floor((v - 39) / 8));
  const t = (v - SCALE[i][0]) / 8;
  return [1, 2, 3].map(k => SCALE[i][k] + (SCALE[i + 1][k] - SCALE[i][k]) * t);
}

function levelAt(col, y) {
  for (let i = 1; i < col.length - 2; i += 2) {
    if (y <= col[i + 2]) {
      let t = (y - col[i]) / (col[i + 2] - col[i]);
      // the main lobe is flat around the axis
      if (i + 4 >= col.length) t = Math.sin(t * Math.PI / 2);
      return col[i + 1] + (col[i + 3] - col[i + 1]) * t;
    }
  }
  return col[col.length - 1];
}

function buildField(w, h) {
  const field = [];
  const half = (h - 1) / 2;
  for (let y = 0; y < h; y++) {
    const row = new Float32Array(w);
    const my = 70 + 429 * Math.min(y, h - 1 - y) / half;
    const levels = MAP.map(c => levelAt(c, my));
    let k = 0;
    for (let x = 0; x < w; x++) {
      const mx = 119 + 3 * x;
      while (k < MAP.length - 2 && MAP[k + 1][0] < mx) k++;
      const t = Math.min(1, (mx - MAP[k][0]) / (MAP[k + 1][0] - MAP[k][0]));
      row[x] = levels[k] + (levels[k + 1] - levels[k]) * t;
    }
    field.push(row);
  }
  return field;
}

function contour(ctx, field, level, step) {
  const h = field.length, w = field[0].length;
  ctx.beginPath();
  for (let y = 0; y + step < h; y += step) {
    for (let x = 0; x + step < w; x += step) {
      const a = field[y][x] - level, b = field[y][x + step] - level;
      const c = field[y + step][x + step] - level, d = field[y + step][x] - level;
      const hit = [];
      if (a * b < 0) hit.push([x + step * a / (a - b), y]);
      if (b * c < 0) hit.push([x + step, y + step * b / (b - c)]);
      if (c * d < 0) hit.push([x + step * d / (d - c), y + step]);
      if (d * a < 0) hit.push([x, y + step * a / (a - d)]);
      for (let i = 0; i + 1 < hit.length; i += 2) {
        ctx.moveTo(hit[i][0] + 0.5, hit[i][1] + 0.5);
        ctx.lineTo(hit[i + 1][0] + 0.5, hit[i + 1][1] + 0.5);
      }
    }
  }
  ctx.stroke();
}

function drawDirectivity() {
  const svg = document.getElementById('directivity');
  const h = 286;

  const fo = add(svg, 'foreignObject', { x: 33, y: 18, width: WIDTH, height: h });
  const canvas = document.createElement('canvas');
  canvas.width = WIDTH;
  canvas.height = h;
  fo.appendChild(canvas);
  const ctx = canvas.getContext('2d');
  const field = buildField(WIDTH, h);
  const img = ctx.createImageData(WIDTH, h);
  for (let y = 0; y < h; y++) {
    for (let x = 0; x < WIDTH; x++) {
      const c = color(field[y][x]);
      const i = (y * WIDTH + x) * 4;
      img.data[i] = c[0];
      img.data[i + 1] = c[1];
      img.data[i + 2] = c[2];
      img.data[i + 3] = 255;
    }
  }
  ctx.putImageData(img, 0, 0);
  ctx.strokeStyle = 'rgba(0, 0, 0, 0.5)';
  ctx.lineWidth = 1;
  [80, 74, 68, 62, 56, 50].forEach(l => contour(ctx, field, l, 1));

  verticals(svg, h, 'rgba(128,128,128,.45)', 'rgba(128,128,128,.8)');
  for (let i = 1; i < 8; i++) {
    const y = Math.floor(TOP + i * h / 8) + 0.5;
    add(svg, 'line', { x1: LEFT, x2: LEFT + WIDTH, y1: y, y2: y, stroke: 'rgba(128,128,128,.7)' });
  }
  add(svg, 'rect', { x: LEFT, y: TOP, width: WIDTH, height: h, fill: 'none', stroke: '#646464' });

  const grad = add(add(svg, 'defs', {}), 'linearGradient', { id: 'bar', x1: 0, x2: 0, y1: 0, y2: 1 });
  SCALE.slice().reverse().forEach(([v, r, g, b]) =>
    add(grad, 'stop', { offset: (95 - v) / 56, 'stop-color': `rgb(${r},${g},${b})` }));
  add(svg, 'rect', { x: 1, y: 17, width: 29, height: 289, fill: 'url(#bar)' });
  [95, 87, 79, 71, 63, 55, 47, 39].forEach((v, i) => add(svg, 'text', {
    x: 28, y: 19 + i * 41, 'text-anchor': 'end', fill: v === 55 || v === 39 ? '#fff' : '#000'
  }, v));

  captions(svg, 'Directivity (hor)', 'deg');
  rightLabels(svg, [180, 135, 90, 45, 0, -45, -90, -135, -180], h);
  freqLabels(svg, 315);
}

drawSpl();
drawCta();
drawDirectivity();
```
